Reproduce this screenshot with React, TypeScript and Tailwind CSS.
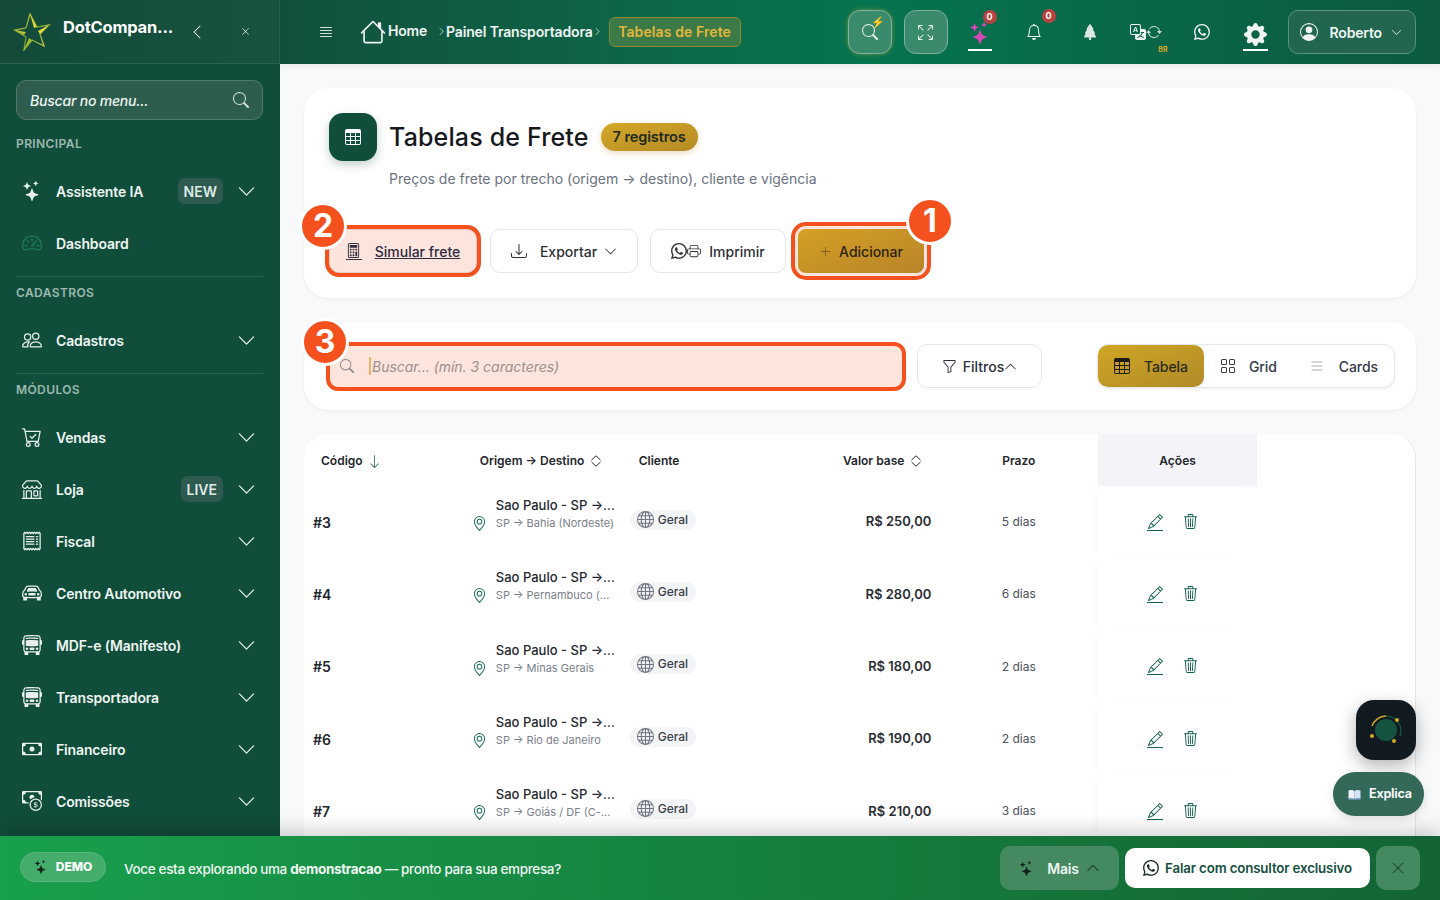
import React from 'react';
import type { IconType } from 'react-icons';
import {
  BsArrowDown,
  BsArrowRepeat,
  BsArrowsFullscreen,
  BsBell,
  BsBusFront,
  BsCalculator,
  BsCarFront,
  BsCartCheck,
  BsCash,
  BsCashCoin,
  BsChevronDown,
  BsChevronLeft,
  BsChevronRight,
  BsChevronUp,
  BsDownload,
  BsFunnel,
  BsGearFill,
  BsGeoAlt,
  BsGlobe,
  BsGrid,
  BsHouse,
  BsJustify,
  BsList,
  BsPencil,
  BsPeople,
  BsPersonCircle,
  BsPlusLg,
  BsPrinter,
  BsReceipt,
  BsSearch,
  BsShop,
  BsSpeedometer2,
  BsStars,
  BsTable,
  BsTranslate,
  BsTrash3,
  BsTreeFill,
  BsWhatsapp,
  BsXLg,
} from 'react-icons/bs';

interface MenuItem {
  label: string;
  icon: IconType;
  badge?: string;
  noChevron?: boolean;
  muted?: boolean;
}

interface Freight {
  code: string;
  route: string;
  value: string;
  days: string;
}

const freights: Freight[] = [
  { code: '#3', route: 'SP → Bahia (Nordeste)', value: 'R$ 250,00', days: '5 dias' },
  { code: '#4', route: 'SP → Pernambuco (...', value: 'R$ 280,00', days: '6 dias' },
  { code: '#5', route: 'SP → Minas Gerais', value: 'R$ 180,00', days: '2 dias' },
  { code: '#6', route: 'SP → Rio de Janeiro', value: 'R$ 190,00', days: '2 dias' },
  { code: '#7', route: 'SP → Goiás / DF (C-...', value: 'R$ 210,00', days: '3 dias' },
];

const modules: MenuItem[] = [
  { label: 'Vendas', icon: BsCartCheck },
  { label: 'Loja', icon: BsShop, badge: 'LIVE' },
  { label: 'Fiscal', icon: BsReceipt },
  { label: 'Centro Automotivo', icon: BsCarFront },
  { label: 'MDF-e (Manifesto)', icon: BsBusFront },
  { label: 'Transportadora', icon: BsBusFront },
  { label: 'Financeiro', icon: BsCash },
  { label: 'Comissões', icon: BsCashCoin },
];

const SortIcon = () => (
  <svg className="w-3 h-3 ml-[6px] shrink-0" viewBox="0 0 12 12" fill="none" stroke="currentColor" strokeWidth={1}>
    <path d="M1.5 5 6 .8 10.500 5M1.500 7 6 11.200 10.500 7" />
  </svg>
);

const MenuRow: React.FC<MenuItem> = ({ label, icon: Icon, badge, noChevron, muted }) => (
  <div className="flex items-center h-[52px] pl-[22px] pr-[24px]">
    <Icon className={`w-[20px] h-[20px] shrink-0 ${muted ? 'text-[#1f7a5c]' : 'text-[#e8f0ed]'}`} />
    <span className="ml-[14px] text-[14px] font-semibold tracking-[-0.15px] text-[#eef5f2]">{label}</span>
    {badge && (
      <span className="ml-auto px-[6px] h-[26px] flex items-center rounded-[7px] bg-[#2e5a50] text-[14px] font-semibold text-[#dfeae6]">
        {badge}
      </span>
    )}
    {!noChevron && (
      <BsChevronDown className={`w-[19px] h-[19px] text-[#e8f0ed] ${badge ? 'ml-[14px]' : 'ml-auto'}`} />
    )}
  </div>
);

const SectionLabel = ({ children }: { children: React.ReactNode }) => (
  <div className="px-4 text-[12px] font-semibold tracking-[0.4px] text-[#9db9af] leading-4">{children}</div>
);

const Sidebar = () => (
  <aside className="w-[280px] shrink-0 bg-[#114d3b] flex flex-col overflow-hidden">
    <div className="h-[64px] shrink-0 flex items-center border-b border-r border-[#2a6351] bg-gradient-to-r from-[#134a39] to-[#18533f] pl-[13px]">
      <svg className="w-[38px] h-[38px] shrink-0" viewBox="0 0 38 38" fill="none">
        <defs>
          <linearGradient id="logoStar" x1="0" y1="0" x2="1" y2="1">
            <stop offset="0" stopColor="#d8d23a" />
            <stop offset="0.5" stopColor="#6f9c35" />
            <stop offset="1" stopColor="#e4dc3f" />
          </linearGradient>
        </defs>
        <path d="M17 1 24 14 36 12 27 21 31 33 19 27 11 37 13 24 2 17 13 15Z" stroke="url(#logoStar)" strokeWidth={1.3} />
        <path d="M17 1 24 14 21 15Z" fill="#dcd63a" />
        <path d="M2 17 13 19 11 22Z" fill="#b7c038" />
        <path d="M11 37 19 27 16 25Z" fill="#a8b935" />
        <path d="M36 12 27 21 25 18Z" fill="#e4dc3f" />
      </svg>
      <span className="ml-[12px] text-[16.500px] font-bold text-white tracking-[-0.2px] -mt-[9px]">DotCompan...</span>
      <BsChevronLeft className="w-[16px] h-[16px] text-[#e8f0ed] ml-[16px]" />
      <BsXLg className="w-[9px] h-[9px] text-[#e8f0ed] ml-[36px]" />
    </div>
    <div className="pl-4 pr-[17px] pt-4">
      <div className="h-[40px] flex items-center rounded-[10px] border border-[#53796d] bg-[#2c5d4e] pl-[13px] pr-[13px]">
        <span className="text-[14px] italic font-medium tracking-[-0.2px] text-[#eef5f2]">Buscar no menu...</span>
        <BsSearch className="w-[16px] h-[16px] ml-auto text-[#d3e0db]" />
      </div>
    </div>
    <div className="pt-[16px]"><SectionLabel>PRINCIPAL</SectionLabel></div>
    <div className="pt-[13px]">
      <MenuRow label="Assistente IA" icon={BsStars} badge="NEW" />
      <MenuRow label="Dashboard" icon={BsSpeedometer2} noChevron muted />
    </div>
    <div className="ml-4 mr-[17px] mt-[7px] border-t border-[#2a6351]" />
    <div className="pt-[8px]"><SectionLabel>CADASTROS</SectionLabel></div>
    <div className="pt-[13px]">
      <MenuRow label="Cadastros" icon={BsPeople} />
    </div>
    <div className="ml-4 mr-[17px] mt-[7px] border-t border-[#2a6351]" />
    <div className="pt-[8px]"><SectionLabel>MÓDULOS</SectionLabel></div>
    <div className="pt-[13px]">
      {modules.map((item) => (
        <MenuRow key={item.label} {...item} />
      ))}
    </div>
  </aside>
);

const Counter = ({ className }: { className: string }) => (
  <span className={`absolute w-[14px] h-[14px] rounded-full bg-[#b8423f] text-white text-[9px] font-bold flex items-center justify-center ${className}`}>
    0
  </span>
);

const Header = () => (
  <header className="relative z-10 h-[64px] shrink-0 flex items-center bg-gradient-to-r from-[#11503d] via-[#06744f] to-[#0b5a41] shadow-[0_2px_6px_rgba(0,0,0,0.08)] pl-[38px]">
    <BsJustify className="w-[16px] h-[16px] text-[#d5e4de]" />
    <BsHouse className="w-[26px] h-[26px] text-[#f0f5f3] ml-[26px]" />
    <span className="ml-[2px] -mt-[4px] text-[14px] font-semibold tracking-[-0.2px] text-[#f0f5f3]">Home</span>
    <BsChevronRight className="w-[9px] h-[9px] text-[#e0ebe7] ml-[10px] -mt-[2px]" />
    <span className="-mt-[2px] text-[14px] font-semibold tracking-[-0.15px] text-[#f0f5f3]">Painel Transportadora</span>
    <BsChevronRight className="w-[9px] h-[9px] text-[#e0ebe7] -mt-[2px]" />
    <span className="ml-[7px] -mt-[1px] h-[30px] w-[132px] flex items-center justify-center rounded-[6px] border border-[#8a8a35] bg-[#3b7a47] text-[14px] font-semibold tracking-[0.1px] text-[#e3b63a]">
      Tabelas de Frete
    </span>
    <div className="ml-[107px] relative w-[44px] h-[44px] flex items-center justify-center rounded-[12px] border border-[#7fb39f] bg-[#3a8a6c] shadow-[0_0_4px_rgba(201,170,40,0.55)]">
      <BsSearch className="w-[16px] h-[16px] text-[#e9f2ee]" />
      <span className="absolute top-[6px] right-[6px] text-[11px] leading-none text-[#d6a72a]">⚡</span>
    </div>
    <div className="ml-[12px] w-[44px] h-[44px] flex items-center justify-center rounded-[12px] border border-[#7fb39f] bg-[#3a8a6c]">
      <BsArrowsFullscreen className="w-[15px] h-[15px] text-[#e9f2ee]" />
    </div>
    <div className="relative ml-[20px] w-[24px] h-[40px] flex flex-col items-center justify-end border-b-2 border-white -mt-[2px]">
      <BsStars className="w-[22px] h-[22px] text-[#d946b8] mb-[5px]" />
      <Counter className="top-[-1px] right-[-5px]" />
    </div>
    <div className="relative ml-[32px] w-[20px] flex justify-center">
      <BsBell className="w-[16px] h-[16px] text-[#eef5f2]" />
      <Counter className="top-[-15px] right-[-12px]" />
    </div>
    <BsTreeFill className="ml-[38px] w-[16px] h-[16px] text-[#d9e8e2]" />
    <div className="relative ml-[32px] flex items-center">
      <BsTranslate className="w-[16px] h-[16px] text-[#eef5f2]" />
      <BsArrowRepeat className="w-[16px] h-[16px] text-[#cfe0da]" />
      <span className="absolute top-[21px] right-[-6px] text-[7px] font-bold text-[#d6a72a]">BR</span>
    </div>
    <BsWhatsapp className="ml-[32px] w-[16px] h-[16px] text-[#eef5f2]" />
    <div className="ml-[33px] w-[25px] h-[40px] flex flex-col items-center justify-end -mt-[2px] border-b-2 border-white">
      <BsGearFill className="w-[23px] h-[23px] text-[#eef5f2] mb-[3px]" />
    </div>
    <div className="ml-[20px] w-[128px] h-[44px] flex items-center rounded-[10px] border border-[#5a9480] bg-[#22664f] pl-[11px]">
      <BsPersonCircle className="w-[18px] h-[18px] text-[#eef5f2]" />
      <span className="ml-[12px] text-[14px] font-semibold tracking-[-0.2px] text-[#eef5f2]">Roberto</span>
      <BsChevronDown className="ml-[9px] w-[11px] h-[11px] text-[#cfe0da]" />
    </div>
  </header>
);

const Marker = ({ n, className }: { n: string; className: string }) => (
  <span className={`absolute z-10 w-[48px] h-[48px] rounded-full bg-[#f4511e] border-[3px] border-white text-white text-[32px] font-bold flex items-center justify-center ${className}`}>
    {n}
  </span>
);

const TitleCard = () => (
  <section className="relative h-[210px] shrink-0 rounded-[24px] bg-white shadow-[0_1px_3px_rgba(0,0,0,0.06)] px-[25px] pt-[25px]">
    <div className="flex items-center">
      <div className="w-[48px] h-[48px] rounded-[14px] bg-[#114d3b] flex items-center justify-center shadow-[0_4px_10px_rgba(17,77,59,0.25)]">
        <BsTable className="w-[16px] h-[16px] text-white" />
      </div>
      <h1 className="ml-[12px] mt-[2px] text-[25px] font-medium tracking-[0.15px] text-[#16181d]">Tabelas de Frete</h1>
      <span className="ml-[12px] h-[28px] px-[12px] flex items-center rounded-full bg-gradient-to-br from-[#d4a826] to-[#b58a26] text-[14.500px] font-semibold tracking-[-0.1px] text-[#1f2a1f] shadow-[0_2px_6px_rgba(180,140,40,0.3)]">
        7 registros
      </span>
    </div>
    <p className="ml-[60px] mt-[8px] text-[14px] leading-5 text-[#6b7280]">
      Preços de frete por trecho (origem → destino), cliente e vigência
    </p>
    <div className="flex items-center mt-[40px]">
      <button className="relative w-[148px] h-[44px] flex items-center justify-center rounded-[10px] border border-[#eccabd] bg-[#fde5dd] text-[14px] font-medium text-[#2e2a3f] shadow-[0_0_0_4px_#f4511e]">
        <span className="flex flex-col items-center mr-[13px]">
          <BsCalculator className="w-[15px] h-[15px] text-[#33303f]" />
          <span className="w-[16px] h-px bg-[#33303f] mt-[1px]" />
        </span>
        <span className="underline">Simular frete</span>
      </button>
      <button className="ml-[13px] w-[148px] h-[44px] flex items-center justify-center rounded-[10px] border border-[#e5e7eb] bg-white text-[14px] font-medium text-[#2c3038]">
        <BsDownload className="w-[16px] h-[16px] mr-[13px]" />
        Exportar
        <BsChevronDown className="w-[13px] h-[13px] ml-[7px]" />
      </button>
      <button className="ml-[12px] w-[136px] h-[44px] flex items-center justify-center rounded-[10px] border border-[#e5e7eb] bg-white text-[14px] font-medium text-[#2c3038]">
        <BsWhatsapp className="w-[16px] h-[16px]" />
        <BsPrinter className="w-[14px] h-[14px] mr-[8px]" />
        Imprimir
      </button>
      <button className="ml-[12px] w-[126px] h-[44px] flex items-center justify-center rounded-[8px] bg-gradient-to-br from-[#d4a024] to-[#b98428] text-[14px] font-medium text-[#2c2412] shadow-[0_0_0_3px_#fde5dd,0_0_0_7px_#f4511e]">
        <BsPlusLg className="w-[13px] h-[13px] mr-[7px] text-[#7a5d1f]" />
        Adicionar
      </button>
    </div>
    <Marker n="2" className="left-[-5px] top-[114px]" />
    <Marker n="1" className="left-[602px] top-[109px]" />
  </section>
);

const FilterCard = () => (
  <section className="relative h-[88px] shrink-0 mt-[24px] rounded-[24px] bg-white shadow-[0_1px_3px_rgba(0,0,0,0.06)] pl-[26px] pr-[21px] flex items-center">
    <div className="w-[572px] h-[41px] flex items-center rounded-[8px] bg-[#fde4dc] shadow-[0_0_0_4px_#f4511e] pl-[10px]">
      <BsSearch className="w-[14px] h-[14px] text-[#8b8785]" />
      <span className="ml-[15px] w-[2px] h-[18px] bg-[#eab56a]" />
      <span className="ml-[1px] text-[14px] italic tracking-[-0.02px] text-[#9a918d]">Buscar... (mín. 3 caracteres)</span>
    </div>
    <button className="ml-[15px] w-[125px] h-[44px] flex items-center justify-center rounded-[10px] border border-[#e5e7eb] bg-white text-[14px] font-medium text-[#2c3038]">
      <BsFunnel className="w-[15px] h-[15px] mr-[6px]" />
      Filtros
      <BsChevronUp className="w-[13px] h-[13px]" />
    </button>
    <div className="ml-auto w-[298px] h-[44px] flex items-center rounded-[12px] border border-[#e5e7eb] bg-white shadow-[0_1px_3px_rgba(0,0,0,0.08)] text-[14px] font-medium tracking-[-0.1px] text-[#363b45]">
      <div className="w-[106px] h-full flex items-center rounded-[10px] bg-gradient-to-br from-[#d0a624] to-[#b08a28] text-[#2a2a1c] pl-[16px]">
        <BsTable className="w-[16px] h-[16px] text-[#1f1b12] mr-[14px]" />
        Tabela
      </div>
      <BsGrid className="ml-[16px] w-[16px] h-[16px]" />
      <span className="ml-[13px]">Grid</span>
      <BsList className="ml-[32px] w-[16px] h-[16px] text-[#a8abb3]" />
      <span className="ml-[14px]">Cards</span>
    </div>
    <Marker n="3" className="left-[-3px] top-[-4px]" />
  </section>
);

const FreightTable = () => (
  <section className="mt-[24px] flex-1 rounded-t-[24px] bg-white border-r border-[#e5e7eb] overflow-hidden">
    <table className="w-[953px] table-fixed border-collapse text-[#23262d]">
      <thead>
        <tr className="h-[52px] text-[12px] font-semibold">
          <th className="text-left font-semibold pl-[17px] pt-[2px]">
            <span className="flex items-center">
              Código
              <BsArrowDown className="w-[15px] h-[15px] ml-[4px] text-[#4f7a5f]" />
            </span>
          </th>
          <th className="text-left font-semibold pl-[17px] pt-[2px]">
            <span className="flex items-center">
              Origem → Destino
              <SortIcon />
            </span>
          </th>
          <th className="text-left font-semibold pl-[17px] pt-[2px]">Cliente</th>
          <th className="font-semibold pr-[17px] pt-[2px]">
            <span className="flex items-center justify-end">
              Valor base
              <SortIcon />
            </span>
          </th>
          <th className="font-semibold pt-[2px]">Prazo</th>
          <th className="font-semibold bg-[#f3f4f8] pt-[2px]">Ações</th>
        </tr>
      </thead>
      <tbody>
        {freights.map((f) => (
          <tr key={f.code} className="h-[72.3px]">
            <td className="pl-[9px] text-[14px] font-semibold">{f.code}</td>
            <td>
              <div className="flex items-start pl-[9px]">
                <BsGeoAlt className="w-[15px] h-[15px] mt-[20px] shrink-0 text-[#1b6b57]" />
                <div className="ml-[9px] min-w-0 mb-[16px]">
                  <div className="text-[13px] leading-[18px] font-medium text-[#25282f] truncate">Sao Paulo - SP →...</div>
                  <div className="text-[11px] leading-[18px] text-[#7b808a] whitespace-nowrap">{f.route}</div>
                </div>
              </div>
            </td>
            <td className="pl-[8px]">
              <span className="-mt-[5px] w-[66px] h-[20px] flex items-center rounded-full bg-[#f3f4f6] pl-[7px] text-[12px] font-medium text-[#3b4048]">
                <BsGlobe className="w-[17px] h-[17px] mr-[4px] text-[#6e7480]" />
                Geral
              </span>
            </td>
            <td className="pr-[8px] text-right text-[13px] font-semibold text-[#2a2d34]">{f.value}</td>
            <td className="text-center text-[12px] text-[#4b5059]">{f.days}</td>
            <td className="shadow-[-6px_0_10px_-8px_rgba(0,0,0,0.08)]">
              <div className="flex items-center justify-center gap-[20px] pr-[10px]">
                <span className="flex flex-col items-center">
                  <BsPencil className="w-[15px] h-[15px] text-[#15604c]" />
                  <span className="mt-[1px] w-[16px] h-px bg-[#15604c]" />
                </span>
                <BsTrash3 className="w-[15px] h-[15px] text-[#15604c] -mt-[2px]" />
              </div>
            </td>
          </tr>
        ))}
      </tbody>
    </table>
  </section>
);

const DemoBar = () => (
  <footer className="relative z-20 h-[64px] shrink-0 flex items-center bg-gradient-to-r from-[#18a04c] to-[#136434] shadow-[0_-6px_18px_rgba(0,0,0,0.18)] pl-[20px] pr-[20px]">
    <span className="w-[86px] h-[30px] -mt-[2px] flex items-center justify-center rounded-full border border-[#5ab57f] bg-[#44ad6c] text-[12px] font-extrabold text-white">
      <BsStars className="w-[14px] h-[14px] mr-[8px] text-[#10241a]" />
      DEMO
    </span>
    <p className="ml-[18px] mt-[2px] text-[13.500px] tracking-[-0.35px] font-medium text-[#f0f7f3]">
      Voce esta explorando uma <strong className="font-bold">demonstracao</strong> — pronto para sua empresa?
    </p>
    <button className="ml-auto w-[119px] h-[44px] flex items-center justify-center rounded-[10px] bg-[#44895f] text-[14px] font-semibold tracking-[-0.2px] text-[#eef5f2]">
      <BsStars className="w-[15px] h-[15px] mr-[13px] text-[#10241a]" />
      Mais
      <BsChevronUp className="w-[14px] h-[14px] ml-[7px] text-[#1a3a28]" />
    </button>
    <button className="ml-[6px] w-[245px] h-[40px] flex items-center justify-center rounded-[10px] bg-white text-[13.300px] font-semibold tracking-[-0.15px] text-[#17503f]">
      <BsWhatsapp className="w-[16px] h-[16px] mr-[6px] text-[#1c2b26]" />
      <span className="mt-[1px]">Falar com consultor exclusivo</span>
    </button>
    <button className="ml-[6px] w-[44px] h-[44px] flex items-center justify-center rounded-[10px] bg-[#44895f]">
      <BsXLg className="w-[14px] h-[14px] text-[#1a3a28]" />
    </button>
  </footer>
);

const FloatingHelpers = () => (
  <>
    <div className="absolute z-10 left-[1356px] top-[700px] w-[60px] h-[60px] rounded-[18px] bg-[#111a20] shadow-[0_6px_18px_rgba(0,0,0,0.3)] flex items-center justify-center">
      <svg className="w-[40px] h-[40px]" viewBox="0 0 40 40" fill="none">
        <circle cx="20" cy="20" r="11" fill="#14533f" />
        <path d="M6 16A15 15 0 0 1 20 6" stroke="#d4a826" strokeWidth={1.5} />
        <path d="M20 6a15 15 0 0 1 14 20" stroke="#14533f" strokeWidth={1.500} />
        <circle cx="31" cy="10" r="2" fill="#d4a826" />
        <circle cx="6" cy="26" r="2" fill="#d4a826" />
        <circle cx="28" cy="31" r="2" fill="#d4a826" />
      </svg>
    </div>
    <div className="absolute z-10 left-[1333px] top-[772px] w-[91px] h-[44px] rounded-full bg-[#346858] flex items-center pl-[15px] text-[12.500px] font-bold tracking-[-0.2px] text-[#f3f7f5] shadow-[0_4px_10px_rgba(0,0,0,0.12)]">
      <svg className="w-[13px] h-[11px] mr-[8px] shrink-0" viewBox="0 0 13 11">
        <path d="M.5 1.500C2.500.7 4.800.8 6.500 2v8C4.800 9 2.500 8.900.5 9.500Z" fill="#eef3fb" />
        <path d="M12.500 1.500C10.500.7 8.200.8 6.500 2v8C8.200 9 10.500 8.900 12.500 9.500Z" fill="#d5e2f8" />
        <path d="M.5 10h12" stroke="#8fb4ee" strokeWidth={1} />
      </svg>
      Explica
    </div>
  </>
);

export default function App() {
  return (
    <div className="relative w-[1440px] h-[900px] overflow-hidden flex flex-col bg-[#f8f9fb] font-['Inter',sans-serif]">
      <div className="flex h-[836px] shrink-0">
        <Sidebar />
        <div className="flex-1 min-w-0 flex flex-col">
          <Header />
          <main className="flex-1 min-h-0 flex flex-col pl-[24px] pr-[24px] pt-[24px] overflow-hidden">
            <TitleCard />
            <FilterCard />
            <FreightTable />
          </main>
        </div>
      </div>
      <DemoBar />
      <FloatingHelpers />
    </div>
  );
}
